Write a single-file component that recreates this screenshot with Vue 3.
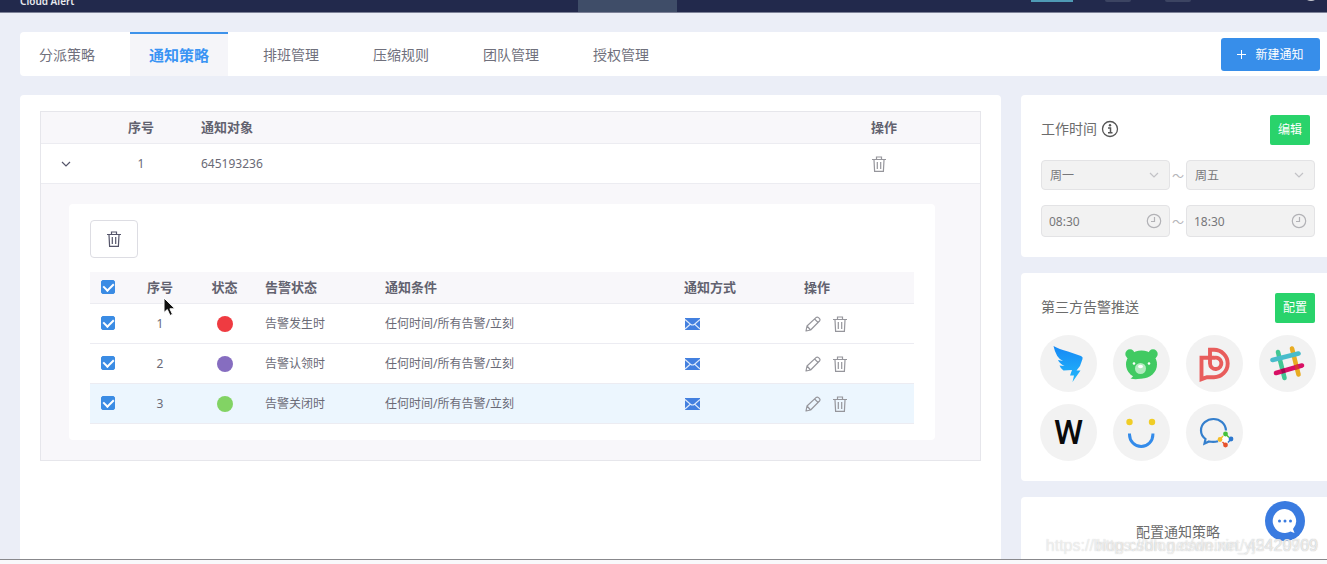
<script setup>
import { reactive, computed } from 'vue'

const tabs = ['分派策略', '通知策略', '排班管理', '压缩规则', '团队管理', '授权管理']
const activeTab = '通知策略'

const rules = reactive([
  { id: 1, tone: 'red', state: '告警发生时', condition: '任何时间/所有告警/立刻', checked: true },
  { id: 2, tone: 'purple', state: '告警认领时', condition: '任何时间/所有告警/立刻', checked: true },
  { id: 3, tone: 'green', state: '告警关闭时', condition: '任何时间/所有告警/立刻', checked: true, hover: true }
])

const allChecked = computed({
  get: () => rules.every(r => r.checked),
  set: v => rules.forEach(r => { r.checked = v })
})
</script>

<template>
  <div class="shell">
    <svg width="0" height="0" class="defs" aria-hidden="true">
      <symbol id="trash" viewBox="0 0 14 16">
        <path d="M0 3.500h14M4.500 3V1h5v2M2 4l.6 11.300h8.800L12 4M5.300 6v7M8.700 6v7" fill="none" stroke="currentColor" stroke-width="1.200" />
      </symbol>
      <symbol id="pencil" viewBox="0 0 16 16">
        <path d="M1 15l1-5L11 1.600q1.300-1 2.500 0l1 1q1 1.200 0 2.400L5.600 14zM2 10l3.600 4M9.600 3l3.600 3.700" fill="none" stroke="currentColor" stroke-width="1.200" stroke-linejoin="round" />
      </symbol>
      <symbol id="chevron" viewBox="0 0 10 10">
        <path d="M1 3l4 4 4-4" fill="none" stroke="currentColor" stroke-width="1.200" />
      </symbol>
      <symbol id="clock" viewBox="0 0 16 16">
        <circle cx="8" cy="8" r="6.700" fill="none" stroke="currentColor" stroke-width="1.200" />
        <path d="M8.500 4v4.500H5" fill="none" stroke="currentColor" stroke-width="1.200" />
      </symbol>
    </svg>

    <header class="topbar">
      <span class="brand">Cloud Alert</span>
      <span class="nav-current"></span>
      <div class="tools">
        <i class="tool-line"></i><i class="tool-box"></i><i class="tool-box"></i><i class="avatar"></i>
      </div>
    </header>

    <div class="page">
      <nav class="tabs">
        <a v-for="t in tabs" :key="t" href="#" class="tab" :class="{ active: t === activeTab }">{{ t }}</a>
        <button type="button" class="create">
          <svg width="9" height="9" viewBox="0 0 9 9"><path d="M4.500 0v9M0 4.500h9" stroke="currentColor" /></svg>
          新建通知
        </button>
      </nav>

      <div class="columns">
        <main class="main">
          <table class="outer">
            <colgroup><col class="w50" /><col class="w100" /><col /><col class="w119" /></colgroup>
            <thead>
              <tr><th></th><th class="center">序号</th><th>通知对象</th><th>操作</th></tr>
            </thead>
            <tbody>
              <tr class="row">
                <td class="center">
                  <button type="button" class="icon-btn dark" aria-label="收起"><svg width="10" height="10"><use href="#chevron" /></svg></button>
                </td>
                <td class="center">1</td>
                <td>645193236</td>
                <td>
                  <div class="actions">
                    <button type="button" class="icon-btn" aria-label="删除"><svg width="14" height="16"><use href="#trash" /></svg></button>
                  </div>
                </td>
              </tr>
              <tr>
                <td colspan="4" class="expanded">
                  <section class="detail">
                    <button type="button" class="bulk" aria-label="批量删除"><svg width="14" height="16"><use href="#trash" /></svg></button>
                    <table class="inner">
                      <colgroup>
                        <col class="w36" /><col class="w68" /><col class="w61" /><col class="w120" /><col /><col class="w120" /><col class="w120" />
                      </colgroup>
                      <thead>
                        <tr>
                          <th class="tick"><input v-model="allChecked" type="checkbox" aria-label="全选" /></th>
                          <th class="center">序号</th><th class="center">状态</th><th>告警状态</th><th>通知条件</th><th>通知方式</th><th>操作</th>
                        </tr>
                      </thead>
                      <tbody>
                        <tr v-for="r in rules" :key="r.id" :class="{ hover: r.hover }">
                          <td class="tick"><input v-model="r.checked" type="checkbox" :aria-label="'选择 ' + r.id" /></td>
                          <td class="center">{{ r.id }}</td>
                          <td class="center"><span class="dot" :class="r.tone"></span></td>
                          <td>{{ r.state }}</td>
                          <td>{{ r.condition }}</td>
                          <td>
                            <svg width="16" height="12" viewBox="0 0 16 12">
                              <rect x="1" width="15" height="12" fill="#4380df" />
                              <path d="M1 1.500l5.500 4.700q2 1.500 4 0L16 1.500M1 11l5-4.500M16 11l-5-4.500" fill="none" stroke="#dfeafb" stroke-width="1.100" />
                            </svg>
                          </td>
                          <td>
                            <div class="actions">
                              <button type="button" class="icon-btn" aria-label="编辑"><svg width="16" height="16"><use href="#pencil" /></svg></button>
                              <button type="button" class="icon-btn" aria-label="删除"><svg width="14" height="16"><use href="#trash" /></svg></button>
                            </div>
                          </td>
                        </tr>
                      </tbody>
                    </table>
                  </section>
                </td>
              </tr>
            </tbody>
          </table>
        </main>

        <aside class="side">
          <section class="card hours">
            <div class="card-head">
              <h2>工作时间
                <svg width="18" height="18" viewBox="0 0 18 18">
                  <circle cx="9" cy="9" r="7.500" fill="none" stroke="#555" stroke-width="1.300" />
                  <path d="M7 8h2.500v4.500M7 12.700h4.500" fill="none" stroke="#555" stroke-width="1.500" />
                  <circle cx="9" cy="5.300" r="1.200" fill="#555" />
                </svg>
              </h2>
              <button type="button" class="green-btn inset">编辑</button>
            </div>
            <div class="range">
              <label class="field">
                <select disabled aria-label="开始日"><option>周一</option></select>
                <svg width="10" height="10"><use href="#chevron" /></svg>
              </label>
              <span class="tilde">～</span>
              <label class="field">
                <select disabled aria-label="结束日"><option>周五</option></select>
                <svg width="10" height="10"><use href="#chevron" /></svg>
              </label>
            </div>
            <div class="range">
              <label class="field time">
                <input type="text" value="08:30" disabled aria-label="开始时间" />
                <svg width="16" height="16"><use href="#clock" /></svg>
              </label>
              <span class="tilde">～</span>
              <label class="field time">
                <input type="text" value="18:30" disabled aria-label="结束时间" />
                <svg width="16" height="16"><use href="#clock" /></svg>
              </label>
            </div>
          </section>

          <section class="card push">
            <div class="card-head">
              <h2>第三方告警推送</h2>
              <button type="button" class="green-btn">配置</button>
            </div>
            <div class="apps">
              <a href="#" class="app" aria-label="钉钉">
                <svg viewBox="0 0 57 57">
                  <defs><linearGradient id="wing" x1="0" y1="0" x2="0" y2="1"><stop offset="0" stop-color="#1688f5" /><stop offset="1" stop-color="#22b8fb" /></linearGradient></defs>
                  <path fill="url(#wing)" d="M13.500 11Q19 14 28 16.500L41 21q2.300 1 1.500 3L40 31l-3.500 4.500h4L32.500 47 34 40.500h-4L32 35l-8.500.5q-3-2-4-5l5 .5q-5-2.500-6.500-6l5 1q-7-3-9.500-15z" />
                </svg>
              </a>
              <a href="#" class="app" aria-label="小熊">
                <svg viewBox="0 0 57 57">
                  <g fill="#41ca62"><circle cx="17" cy="19" r="4.700" /><circle cx="40" cy="19" r="4.700" /><ellipse cx="28.500" cy="29.500" rx="15.500" ry="14" /><path d="M20 38q1 4-2.500 5.500 6 1.500 13-.5z" /></g>
                  <circle cx="21" cy="28.500" r="1.300" fill="#fff" /><circle cx="36" cy="28.500" r="1.300" fill="#fff" />
                  <circle cx="27.500" cy="33.500" r="5.500" fill="#b2ebbf" /><ellipse cx="27.500" cy="31.500" rx="2.500" ry="1.700" fill="#fff" />
                </svg>
              </a>
              <a href="#" class="app" aria-label="瞩目">
                <svg viewBox="0 0 57 57"><path d="M24 28.500V14.800h4a13.700 13.700 0 0 1 0 27.400H21l-5.500 2V22.800H28.500a5.700 5.700 0 1 1-4.500 5.700" fill="none" stroke="#e85d5c" stroke-width="3.900" /></svg>
              </a>
              <a href="#" class="app" aria-label="Slack">
                <svg viewBox="0 0 57 57" fill="none" stroke-width="4.600" stroke-linecap="round">
                  <path d="M19 17l6.500 26" stroke="#41c793" /><path d="M33 13.500l6.500 26" stroke="#e8ac22" />
                  <path d="M13.500 25l26-6.500" stroke="#48bccb" /><path d="M17 38l26-7.500" stroke="#d80f64" />
                  <path d="M22.500 36.400l3.500-1" stroke="#a00c50" stroke-linecap="butt" /><path d="M36 32.500l3.500-1" stroke="#d93530" stroke-linecap="butt" />
                </svg>
              </a>
              <a href="#" class="app letter">W</a>
              <a href="#" class="app" aria-label="微笑">
                <svg viewBox="0 0 57 57"><circle cx="16.500" cy="18" r="3.200" fill="#f0cd26" /><circle cx="39" cy="18" r="3.200" fill="#f0cd26" /><path d="M16.500 29.500v1a11.700 12 0 0 0 23.400 0v-1" fill="none" stroke="#338bea" stroke-width="3" /></svg>
              </a>
              <a href="#" class="app" aria-label="企业微信">
                <svg viewBox="0 0 57 57">
                  <path d="M40 26.500C39.500 19.500 34 15 27.500 15S15 19.700 15 26.500q0 5 4.500 8.500l-1 4.500 4.500-2q4.500 1 9-.2" fill="none" stroke="#347fcd" stroke-width="2.200" />
                  <path d="M40 30l5 5-5.500 5.500L34 35.500z" fill="#fff" />
                  <g><circle cx="39.500" cy="30" r="2.400" fill="#45c13c" /><circle cx="45" cy="35" r="2.400" fill="#2d78cf" /><circle cx="39.500" cy="41" r="2.400" fill="#e6532d" /><circle cx="34" cy="35.500" r="2.400" fill="#f4bd27" /></g>
                  <g fill="none" stroke-width="1.400"><path d="M39.500 30l3.500 3.500" stroke="#45c13c" /><path d="M45 35l-3 3.500" stroke="#2d78cf" /><path d="M39.500 41l-3-3" stroke="#e6532d" /><path d="M34 35.500l3-3.500" stroke="#f4bd27" /></g>
                </svg>
              </a>
            </div>
          </section>

          <section class="card policy">
            <h2>配置通知策略</h2>
          </section>
        </aside>
      </div>
    </div>

    <footer class="statusbar"></footer>

    <button type="button" class="chat" aria-label="在线客服">
      <svg width="40" height="40" viewBox="0 0 40 40">
        <circle cx="20" cy="20" r="20" fill="#3a7be0" />
        <path d="M20 8a12 12 0 1 0 5.500 22.500l4 1.500-1.500-4A12 12 0 0 0 20 8z" fill="#fff" />
        <circle cx="14.500" cy="20" r="1.500" fill="#3a7be0" /><circle cx="20" cy="20" r="1.500" fill="#3a7be0" /><circle cx="25.500" cy="20" r="1.500" fill="#3a7be0" />
      </svg>
    </button>
    <span class="watermark">https://blog.csdn.net/weixin_45420969</span>
    <span class="watermark">https://blog.csdn.net/yj2429709</span>
    <svg class="pointer" width="14" height="20" viewBox="0 0 14 20">
      <path d="M1 1v14.500l3.300-3 2.700 6 2.500-1.200-2.600-5.500H12z" fill="#111" stroke="#fff" stroke-width="1" />
    </svg>
  </div>
</template>

<style>
body { margin: 0; background: #ebeef7; }
</style>

<style scoped>
* { box-sizing: border-box; }
.shell {
  position: relative;
  display: flex;
  flex-direction: column;
  height: 100vh;
  overflow: hidden;
  background: #ebeef7;
  color: #6a6a76;
  font: 12px/20px "Noto Sans", "Noto Sans CJK SC", sans-serif;
}
.defs { position: absolute; }
button { font: inherit; cursor: pointer; }
svg { display: block; }

.topbar {
  flex: none;
  display: grid;
  grid-template-columns: 6fr 99px 7fr;
  height: 13px;
  padding-left: 20px;
  overflow: hidden;
  background: #22294c;
  border-bottom: 1px solid #7d8298;
}
.brand { margin-top: -5px; color: #e8e9ef; font-size: 10px; line-height: 12px; font-weight: 600; }
.nav-current { background: #3f4d68; }
.tools { display: flex; justify-content: flex-end; align-items: flex-start; padding-right: 8px; }
.tool-line { width: 42px; height: 2px; margin-right: 32px; background: #4f9ab5; }
.tool-box { width: 26px; height: 2px; margin-right: 34px; background: #3c4462; border-radius: 0 0 3px 3px; }
.tool-box + .avatar { margin-left: 78px; }
.avatar { width: 16px; height: 16px; margin-top: -15px; border-radius: 50%; background: #c9cbd2; }

.page { flex: 1; min-height: 0; display: flex; flex-direction: column; gap: 19px; padding: 19px 0 0 20px; }
.tabs { flex: none; display: flex; gap: 16px; height: 44px; background: #fff; border-radius: 4px 0 0 4px; }
.tab {
  padding: 0 19px;
  border-top: 2px solid transparent;
  color: #70707c;
  font-size: 14px;
  line-height: 42px;
  text-decoration: none;
}
.tab.active { background: #f5f5f9; border-color: #3d92ea; color: #3a94f4; font-size: 15px; font-weight: 700; }
.create {
  display: flex;
  align-items: center;
  justify-content: center;
  gap: 9px;
  width: 99px;
  height: 33px;
  margin: 6px 7px 0 auto;
  padding: 0;
  border: 0;
  border-radius: 3px;
  background: #378eea;
  color: #fff;
}

.columns { flex: 1; min-height: 0; display: flex; gap: 20px; }
.main { flex: 1; min-width: 0; padding: 16px 20px; background: #fff; border-radius: 4px 4px 0 0; }

table { width: 100%; border-collapse: separate; border-spacing: 0; table-layout: fixed; }
th { text-align: left; font-size: 13px; font-weight: 700; color: #62626f; background: #f8f7fa; }
th, td { padding: 0 10px; }
.center { text-align: center; }
.w36 { width: 36px; }
.w50 { width: 50px; }
.w61 { width: 61px; }
.w68 { width: 68px; }
.w100 { width: 100px; }
.w119 { width: 119px; }
.w120 { width: 120px; }
.outer { border: 1px solid #e6e6eb; }
.outer th { height: 32px; padding-bottom: 2px; border-bottom: 1px solid #ececf1; }
.row td { height: 40px; border-bottom: 1px solid #ececf1; }
.outer .expanded { padding: 20px 45px 20px 28px; background: #f8f7fa; }
.detail { padding: 16px 21px; background: #fff; border-radius: 4px; }
.bulk {
  display: flex;
  align-items: center;
  justify-content: center;
  width: 48px;
  height: 38px;
  margin-bottom: 14px;
  padding: 0;
  border: 1px solid #dddde3;
  border-radius: 4px;
  background: #fff;
  color: #55556a;
}
.inner td { height: 40px; border-bottom: 1px solid #ececf2; }
.inner .tick { padding: 0 11px 2px; }
.hover td { background: #ecf6fe; }
.icon-btn { display: block; padding: 0; border: 0; background: none; color: #96969c; }
.icon-btn.dark { margin: 0 auto; color: #55556a; }
.actions { display: flex; gap: 12px; padding-left: 1px; }
.dot { display: block; width: 16px; height: 16px; margin: 0 auto; border-radius: 50%; }
.red { background: #ef3b41; }
.purple { background: #866dc0; }
.green { background: #82d364; }

input[type="checkbox"] {
  appearance: none;
  display: grid;
  place-items: center;
  width: 14px;
  height: 14px;
  margin: 0;
  border: 1px solid #3b8ce4;
  border-radius: 2px;
  background: #fff;
}
input[type="checkbox"]:checked { background: #3b8ce4; }
input[type="checkbox"]:checked::after {
  content: "";
  width: 5px;
  height: 8px;
  margin-bottom: 3px;
  border: solid #fff;
  border-width: 0 2px 2px 0;
  transform: rotate(45deg);
}

.side { flex: 0 0 306px; display: flex; flex-direction: column; gap: 16px; }
.card { flex: none; padding: 20px 12px 20px 20px; background: #fff; border-radius: 4px 0 0 4px; }
.card-head { display: flex; justify-content: space-between; }
h2 { display: flex; align-items: center; gap: 4px; height: 28px; margin: 0; font-size: 14px; line-height: 28px; font-weight: 400; color: #6c6c6c; }
.green-btn { width: 40px; height: 30px; padding: 0; border: 0; border-radius: 2px; background: #29d36b; color: #fff; }
.green-btn.inset { margin-right: 5px; }
.range { display: flex; align-items: center; margin-top: 15px; }
.field { position: relative; flex: 1; min-width: 0; }
.field select, .field input {
  display: block;
  width: 100%;
  height: 30px;
  padding: 2px 8px 0;
  appearance: none;
  border: 1px solid #e3e3e5;
  border-radius: 4px;
  background: #f2f2f2;
  color: #77777a;
  font: inherit;
  opacity: 1;
}
.field input { height: 32px; padding: 0 7px; }
.field svg { position: absolute; top: 10px; right: 11px; color: #c2c2c6; }
.time svg { top: 8px; right: 8px; color: #b2b2b6; }
.tilde { flex: 0 0 16px; padding-top: 4px; text-align: center; line-height: 20px; color: #b5b5b9; }
.push { padding-bottom: 20px; }
.apps { display: grid; grid-template-columns: repeat(4, 57px); gap: 12px 16px; margin: 12px -1px 0; }
.app {
  display: grid;
  place-items: center;
  height: 57px;
  border-radius: 50%;
  background: #f2f2f2;
  color: #0a0a0a;
  text-decoration: none;
}
.app svg { width: 57px; height: 57px; }
.letter { font: 500 33px/57px Roboto, sans-serif; }
.policy { flex: 1; }
.policy h2 { justify-content: center; height: 30px; line-height: 30px; }

.statusbar { flex: none; height: 5px; background: #f9f9fb; border-top: 1px solid #88888c; }
.chat { position: absolute; right: 22px; bottom: 23px; padding: 0; border: 0; background: none; }
.watermark {
  position: absolute;
  right: 9px;
  bottom: 8px;
  color: rgba(255, 255, 255, 0.6);
  font: 16px/20px "Liberation Sans", sans-serif;
  text-shadow: 0 0 1px rgba(130, 130, 130, 0.4);
}
.pointer { position: absolute; left: 163px; top: 297px; }
</style>
